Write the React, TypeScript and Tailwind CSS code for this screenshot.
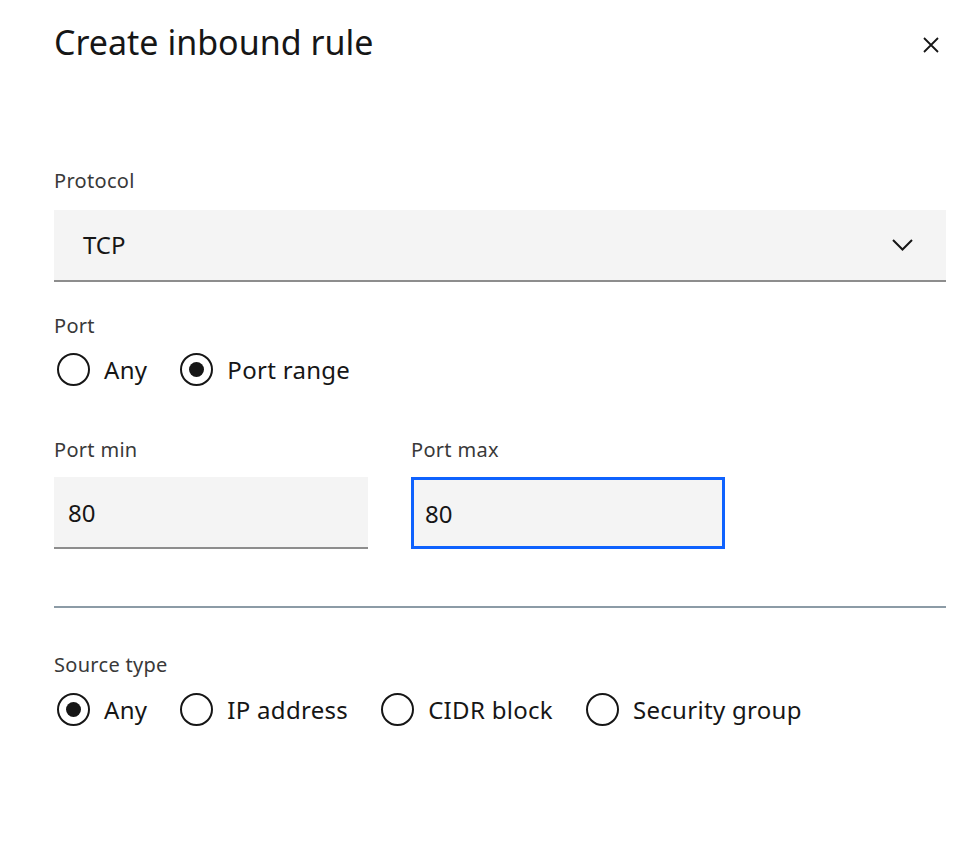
import { useState } from "react";

const font = { fontFamily: '"Noto Sans", "Open Sans", Arial, sans-serif' };

function Radio({
  label,
  checked,
  onClick,
}: {
  label: string;
  checked: boolean;
  onClick: () => void;
}) {
  return (
    <button
      type="button"
      onClick={onClick}
      className="flex items-center mr-[30px] text-[#161616]"
    >
      <span className="flex items-center justify-center w-[33px] h-[33px] rounded-full border-[2px] border-[#161616] ml-[3px]">
        {checked && <span className="w-[15px] h-[15px] rounded-full bg-[#161616]" />}
      </span>
      <span className="ml-[14px] text-[24px] leading-[32px] tracking-[0.3px]">{label}</span>
    </button>
  );
}

export default function App() {
  const [port, setPort] = useState("range");
  const [source, setSource] = useState("any");
  const [portMin, setPortMin] = useState("80");
  const [portMax, setPortMax] = useState("80");

  return (
    <div className="w-full h-[854px] bg-white text-[#161616]" style={font}>
      <div className="flex items-start justify-between pl-[54px] pr-[35px] pt-[20px]">
        <h1 className="text-[34px] leading-[44px] font-normal">Create inbound rule</h1>
        <button type="button" className="mt-[13px] p-[4px]" aria-label="Close">
          <svg width="16" height="16" viewBox="0 0 16 16" fill="none">
            <path d="M1 1L15 15M15 1L1 15" stroke="#161616" strokeWidth="1.8" />
          </svg>
        </button>
      </div>

      <div className="pl-[54px] pr-[32px] pt-[103px]">
        <label className="block text-[20px] leading-[28px] tracking-[0.3px] text-[#393939]">Protocol</label>
        <div className="mt-[15px] flex items-center justify-between h-[72px] bg-[#f4f4f4] border-b-[2px] border-[#8d8d8d] pl-[29px] pr-[33px]">
          <span className="text-[24px] leading-[32px]">TCP</span>
          <svg width="21" height="12" viewBox="0 0 21 12" fill="none">
            <path d="M1 1L10.5 10.5L20 1" stroke="#161616" strokeWidth="2" />
          </svg>
        </div>

        <label className="block mt-[30px] text-[20px] leading-[28px] tracking-[0.3px] text-[#393939]">Port</label>
        <div className="mt-[13px] flex items-center">
          <Radio label="Any" checked={port === "any"} onClick={() => setPort("any")} />
          <Radio label="Port range" checked={port === "range"} onClick={() => setPort("range")} />
        </div>

        <div className="mt-[50px] flex gap-[43px]">
          <div className="w-[314px]">
            <label className="block text-[20px] leading-[28px] tracking-[0.3px] text-[#393939]">Port min</label>
            <input
              value={portMin}
              onChange={(e) => setPortMin(e.target.value)}
              className="mt-[13px] block w-full h-[72px] bg-[#f4f4f4] border-b-[2px] border-[#8d8d8d] px-[14px] text-[24px] outline-none"
            />
          </div>
          <div className="w-[314px]">
            <label className="block text-[20px] leading-[28px] tracking-[0.3px] text-[#393939]">Port max</label>
            <input
              value={portMax}
              onChange={(e) => setPortMax(e.target.value)}
              className="mt-[13px] block w-full h-[72px] bg-[#f4f4f4] border-[3px] border-[#0f62fe] px-[11px] text-[24px] outline-none"
            />
          </div>
        </div>

        <div className="mt-[57px] h-[2px] bg-[#8c9ba6]" />

        <label className="block mt-[43px] text-[20px] leading-[28px] tracking-[0.3px] text-[#393939]">Source type</label>
        <div className="mt-[14px] flex items-center">
          <Radio label="Any" checked={source === "any"} onClick={() => setSource("any")} />
          <Radio label="IP address" checked={source === "ip"} onClick={() => setSource("ip")} />
          <Radio label="CIDR block" checked={source === "cidr"} onClick={() => setSource("cidr")} />
          <Radio label="Security group" checked={source === "sg"} onClick={() => setSource("sg")} />
        </div>
      </div>
    </div>
  );
}
